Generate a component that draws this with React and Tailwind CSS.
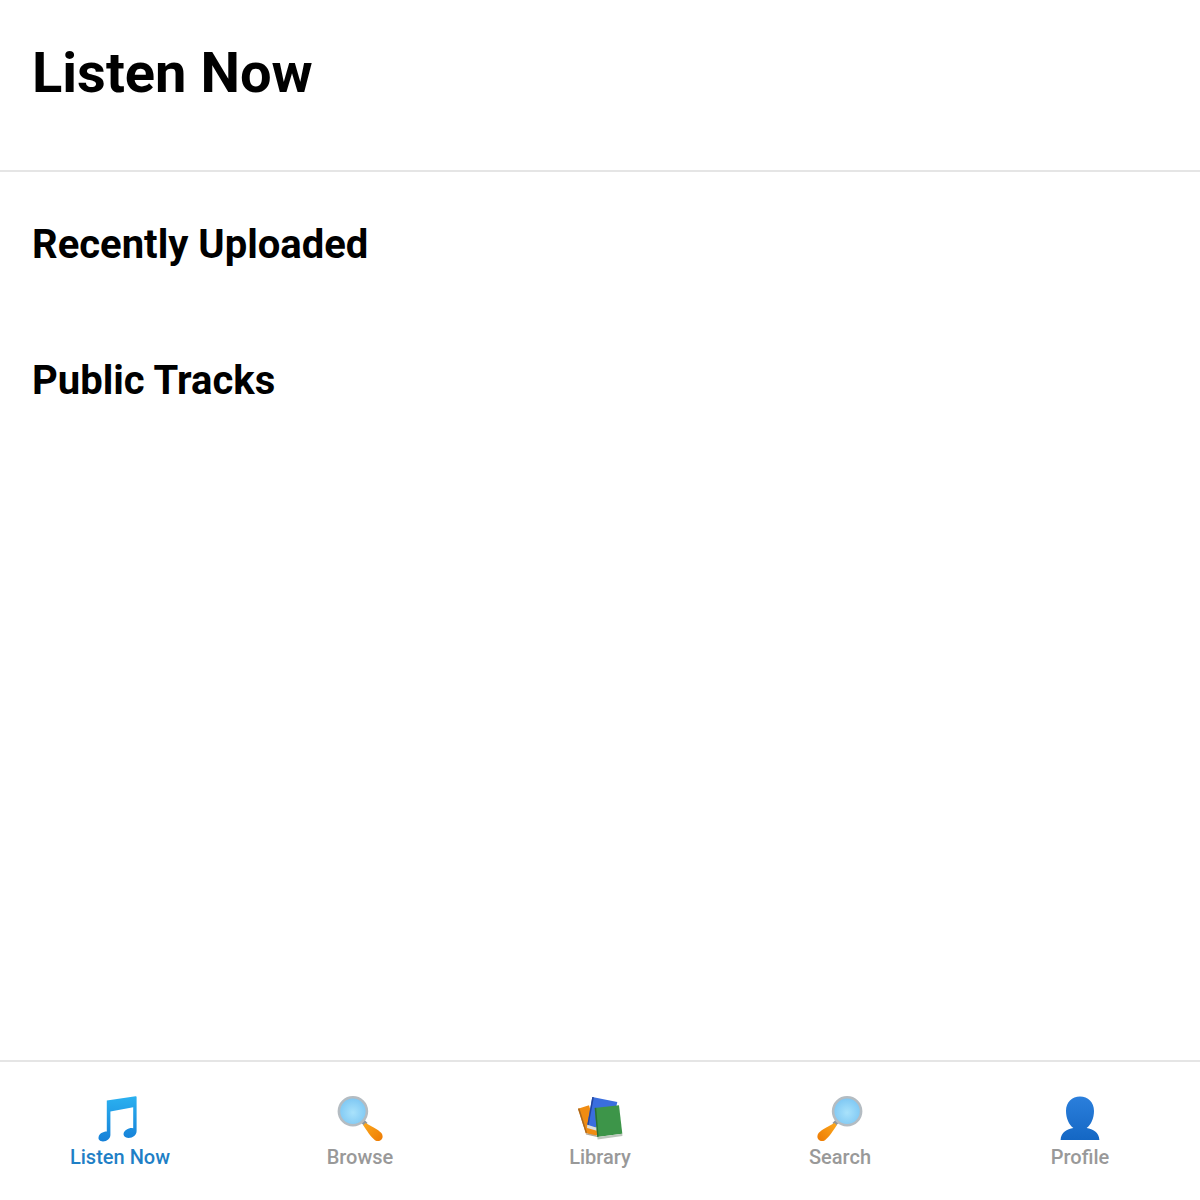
import React from 'react';

function MusicIcon() {
  return (
    <svg width="48" height="48" viewBox="0 0 48 48">
      <defs>
        <linearGradient id="music" x1="0" y1="0" x2="0" y2="1">
          <stop offset="0" stopColor="#2bb1f0" />
          <stop offset="1" stopColor="#1580d8" />
        </linearGradient>
      </defs>
      <path
        fill="url(#music)"
        d="M10.8 6.6 L39.6 2.2 Q40.6 2.1 40.6 3 L40.6 37 C40.6 41 37 44 32.5 44 C29 44 27.2 41.8 27.6 39.6 C28 36.6 31.8 34 36 34 L37.2 34.2 L37.2 13.2 L14.4 17.4 L14.4 41 C14.4 44.6 11 47.4 7 47.4 C3.8 47.4 2 45.4 2.6 43 C3.2 40 6.8 37.6 10.8 37.6 L10.8 6.6 Z"
      />
    </svg>
  );
}

function LensIcon({ id, flip }) {
  return (
    <svg width="48" height="48" viewBox="0 0 48 48">
      <defs>
        <radialGradient id={id} cx="0.5" cy="0.55" r="0.55">
          <stop offset="0" stopColor="#a9e2fb" />
          <stop offset="1" stopColor="#7cc6f3" />
        </radialGradient>
        <linearGradient id={id + 'h'} x1="0" y1="0" x2="1" y2="0">
          <stop offset="0" stopColor="#fba61c" />
          <stop offset="1" stopColor="#ee7d05" />
        </linearGradient>
      </defs>
      <g transform={flip ? 'matrix(-1 0 0 1 48 0)' : undefined}>
        <path d="M25.5 26 L30 30.5" stroke="#8f9498" strokeWidth="4.5" />
        <path
          fill={`url(#${id}h)`}
          transform="translate(37 38) rotate(42)"
          d="M-11.7 -1.6 C-6 -3, 2 -5.4, 7 -4.8 C12.8 -3.6, 12.8 3.6, 7 4.8 C2 5.4, -6 3, -11.7 1.6 Z"
        />
        <circle cx="16.9" cy="17.2" r="14" fill={`url(#${id})`} stroke="#b4bcc2" strokeWidth="2.6" />
      </g>
    </svg>
  );
}

function BooksIcon() {
  return (
    <svg width="48" height="48" viewBox="0 0 48 48">
      <path d="M2 14.7 L13 11.3 L22 41 L18 42 L9.7 39 Z" fill="#f08c12" />
      <path d="M2 14.7 L3.4 14.2 L11 38.6 L9.7 39 Z" fill="#a8671f" />
      <path d="M9.7 39 L21 41.4 L21 43 L10 40.4 Z" fill="#b7a894" />
      <path d="M16.3 3 L41.3 8 L40 14 L19 34 L11.3 30.7 Z" fill="#3a6ede" />
      <path d="M16.3 3 L17.8 3.3 L12.6 31.2 L11.3 30.7 Z" fill="#24459c" />
      <path d="M11.3 30.7 L20 33.4 L20 36.6 L11 34 Z" fill="#dcdfdc" />
      <path d="M18.7 14 L43 11.3 L46.3 39.7 L21.3 43 Z" fill="#3d9549" />
      <path d="M18.7 14 L20.2 13.8 L22.6 42.8 L21.3 43 Z" fill="#2a6d35" />
      <path d="M21.3 43 L46.3 39.7 L46.4 42 L21.6 45.4 Z" fill="#bcc6bc" />
    </svg>
  );
}

function PersonIcon() {
  return (
    <svg width="48" height="48" viewBox="0 0 48 48">
      <defs>
        <linearGradient id="person" x1="0" y1="0" x2="0" y2="1">
          <stop offset="0" stopColor="#2b7fdc" />
          <stop offset="1" stopColor="#1467c4" />
        </linearGradient>
      </defs>
      <path
        fill="url(#person)"
        d="M24 2.5 C32 2.5 38 8 38 17 C38 24 35 31 30.6 34 C37 35.4 43 38 43.4 46 L4.6 46 C5 38 11 35.4 17.4 34 C13 31 10 24 10 17 C10 8 16 2.5 24 2.5 Z"
      />
    </svg>
  );
}

const tabs = [
  { label: 'Listen Now', icon: <MusicIcon />, active: true },
  { label: 'Browse', icon: <LensIcon id="browse" /> },
  { label: 'Library', icon: <BooksIcon /> },
  { label: 'Search', icon: <LensIcon id="search" flip /> },
  { label: 'Profile', icon: <PersonIcon /> },
];

export default function App() {
  return (
    <div className="flex h-[1200px] flex-col bg-white font-['Roboto',sans-serif] text-black">
      <header className="h-[172px] border-b-2 border-[#e5e5e5] px-8 pt-[37px]">
        <h1 className="text-[56px] leading-[72px] font-bold">Listen Now</h1>
      </header>

      <main className="flex flex-1 flex-col gap-[88px] px-8 pt-[49px]">
        <h2 className="text-[40px] leading-[48px] font-bold">Recently Uploaded</h2>
        <h2 className="text-[40px] leading-[48px] font-bold">Public Tracks</h2>
      </main>

      <nav className="flex h-[140px] border-t-2 border-[#e5e5e5]">
        {tabs.map((tab) => (
          <div key={tab.label} className="flex flex-1 flex-col items-center pt-[32px]">
            {tab.icon}
            <span className={`mt-[3px] text-[20px] leading-[24px] font-medium ${tab.active ? 'text-[#1f7fc6]' : 'text-[#999999]'}`}>
              {tab.label}
            </span>
          </div>
        ))}
      </nav>
    </div>
  );
}
